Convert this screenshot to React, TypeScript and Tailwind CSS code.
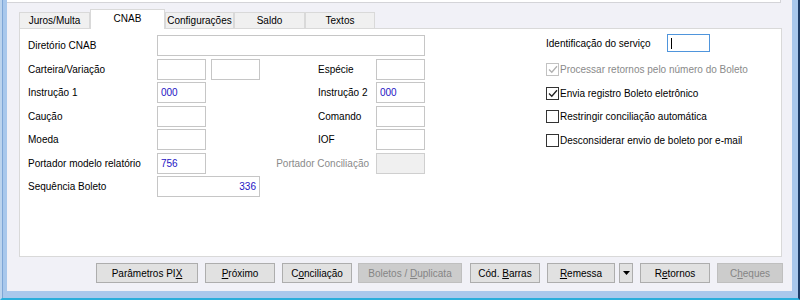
import React from 'react'

// CNAB tab of the bank-account form (legacy WinForms look).

const FIELD = 'h-[21px] border px-[3px] flex items-center text-[#1d14c4]'
const BTN_ON = 'bg-[#e1e1e1] border-[#adadad] text-black'
const BTN_OFF = 'bg-[#cccccc] border-[#bfbfbf] text-[#858585]'

type Middle = { label: string; value?: string; disabled?: boolean }

function Box({ w, value, right, disabled }: { w: string; value?: string; right?: boolean; disabled?: boolean }) {
  return (
    <div
      className={`${FIELD} ${w} ${right ? 'justify-end' : ''} ${
        disabled ? 'border-[#cfcfcf] bg-[#f0f0f0]' : 'border-[#c6c6c6] bg-white'
      }`}
    >
      {value}
    </div>
  )
}

function Row({ label, left, middle }: { label: string; left: React.ReactNode; middle?: Middle }) {
  return (
    <div className="flex h-[21px] items-center">
      <div className="w-[129px]">{label}</div>
      <div className="flex w-[103px] gap-[5px]">{left}</div>
      {middle ? (
        <>
          <div
            className={`w-[116px] ${
              middle.disabled ? 'pr-[7px] text-right text-[#8a8a8a]' : 'pl-[58px]'
            }`}
          >
            {middle.label}
          </div>
          <Box w="w-[49px]" value={middle.value} disabled={middle.disabled} />
        </>
      ) : null}
    </div>
  )
}

function Check({ label, checked, disabled }: { label: string; checked?: boolean; disabled?: boolean }) {
  return (
    <div className="flex h-[23.5px] items-center">
      <span
        className={`flex h-[13px] w-[13px] items-center justify-center border bg-white ${
          disabled ? 'border-[#c2c2c2]' : 'border-[#333333]'
        }`}
      >
        {checked ? (
          <svg width="10" height="9" viewBox="0 0 10 9">
            <path
              d="M1 4.5 L3.8 7.3 L9 1.3"
              fill="none"
              stroke={disabled ? '#b0b0b0' : '#222222'}
              strokeWidth="1.3"
            />
          </svg>
        ) : null}
      </span>
      <span className={`ml-[1px] ${disabled ? 'text-[#8a8a8a]' : 'text-black'}`}>{label}</span>
    </div>
  )
}

function Btn({ w, ml, off, children }: { w: string; ml: string; off?: boolean; children: React.ReactNode }) {
  return (
    <div className={`flex h-[20px] items-center justify-center border ${w} ${ml} ${off ? BTN_OFF : BTN_ON}`}>
      <span className="whitespace-pre">{children}</span>
    </div>
  )
}

const TABS = [
  { label: 'Juros/Multa', w: 'w-[71px]' },
  { label: 'CNAB', w: 'w-[75px]', active: true },
  { label: 'Configurações', w: 'w-[69px]' },
  { label: 'Saldo', w: 'w-[71px]' },
  { label: 'Textos', w: 'w-[70px]' },
]

export default function App() {
  return (
    <div className="flex h-[300px] w-[800px] overflow-hidden border-b-2 border-l-2 border-r-2 border-b-[#2aaedb] border-l-[#bcd4ee] border-r-[#1d3c66] bg-[#a9c8ec] font-['Liberation_Sans',Arial,sans-serif] text-[10px] text-black">
      <div className="w-px bg-[#7ea6d6]" />
      <div className="mb-[7px] ml-[4px] mr-[6px] flex flex-1 flex-col bg-[#f1f1f7]">
        <div className="h-[3px] w-[774px] border-b border-r border-[#d4d4d8] bg-white" />

        <div className="ml-[12px] mt-[6px] flex h-[19px] items-end">
          {TABS.map((t) =>
            t.active ? (
              <div
                key={t.label}
                className={`relative z-10 -mb-px flex h-[20px] items-center justify-center border border-b-0 border-[#d9d9d9] bg-white pb-[2px] ${t.w}`}
              >
                {t.label}
              </div>
            ) : (
              <div
                key={t.label}
                className={`flex h-[16px] items-center justify-center border border-b-0 border-[#d9d9d9] bg-[#f0f0f0] ${t.w}`}
              >
                {t.label}
              </div>
            ),
          )}
        </div>

        <div className="ml-[12px] flex h-[229px] w-[763px] border border-[#d9d9d9] bg-white">
          <div className="flex flex-col gap-[2.5px] pl-[8px] pt-[6px]">
            <div className="flex h-[21px] items-center">
              <div className="w-[129px]">Diretório CNAB</div>
              <Box w="w-[268px]" />
            </div>
            <Row
              label="Carteira/Variação"
              left={
                <>
                  <Box w="w-[49px]" />
                  <Box w="w-[49px]" />
                </>
              }
              middle={{ label: 'Espécie' }}
            />
            <Row label="Instrução 1" left={<Box w="w-[49px]" value="000" />} middle={{ label: 'Instrução 2', value: '000' }} />
            <Row label="Caução" left={<Box w="w-[49px]" />} middle={{ label: 'Comando' }} />
            <Row label="Moeda" left={<Box w="w-[49px]" />} middle={{ label: 'IOF' }} />
            <Row
              label="Portador modelo relatório"
              left={<Box w="w-[49px]" value="756" />}
              middle={{ label: 'Portador Conciliação', disabled: true }}
            />
            <Row label="Sequência Boleto" left={<Box w="w-[103px]" value="336" right />} />
          </div>

          <div className="ml-[121px] flex flex-col pt-[5px]">
            <div className="flex h-[18px] items-center">
              <div className="w-[121px]">Identificação do serviço</div>
              <div className="flex h-[18px] w-[43px] items-center border border-[#4f95dc] bg-white pl-[3px]">
                <span className="h-[11px] w-px bg-black" />
              </div>
            </div>
            <div className="mt-[6px] flex flex-col">
              <Check label="Processar retornos pelo número do Boleto" checked disabled />
              <Check label="Envia registro Boleto eletrônico" checked />
              <Check label="Restringir conciliação automática" />
              <Check label="Desconsiderar envio de boleto por e-mail" />
            </div>
          </div>
        </div>

        <div className="ml-[89px] mt-[6px] flex">
          <Btn w="w-[102px]" ml="ml-0">
            Parâmetros PI<u>X</u>
          </Btn>
          <Btn w="w-[70px]" ml="ml-[7px]">
            <u>P</u>róximo
          </Btn>
          <Btn w="w-[70px]" ml="ml-[7px]">
            C<u>o</u>nciliação
          </Btn>
          <Btn w="w-[104px]" ml="ml-[6px]" off>
            Boletos / <u>D</u>uplicata
          </Btn>
          <Btn w="w-[70px]" ml="ml-[8px]">
            Cód. <u>B</u>arras
          </Btn>
          <Btn w="w-[68px]" ml="ml-[7px]">
            <u>R</u>emessa
          </Btn>
          <Btn w="w-[14px]" ml="ml-[4px]">
            <svg className="block" width="7" height="4" viewBox="0 0 7 4">
              <path d="M0 0 H7 L3.5 4 Z" fill="#000000" />
            </svg>
          </Btn>
          <Btn w="w-[70px]" ml="ml-[7px]">
            R<u>e</u>tornos
          </Btn>
          <Btn w="w-[66px]" ml="ml-[7px]" off>
            C<u>h</u>eques
          </Btn>
        </div>
      </div>
    </div>
  )
}
